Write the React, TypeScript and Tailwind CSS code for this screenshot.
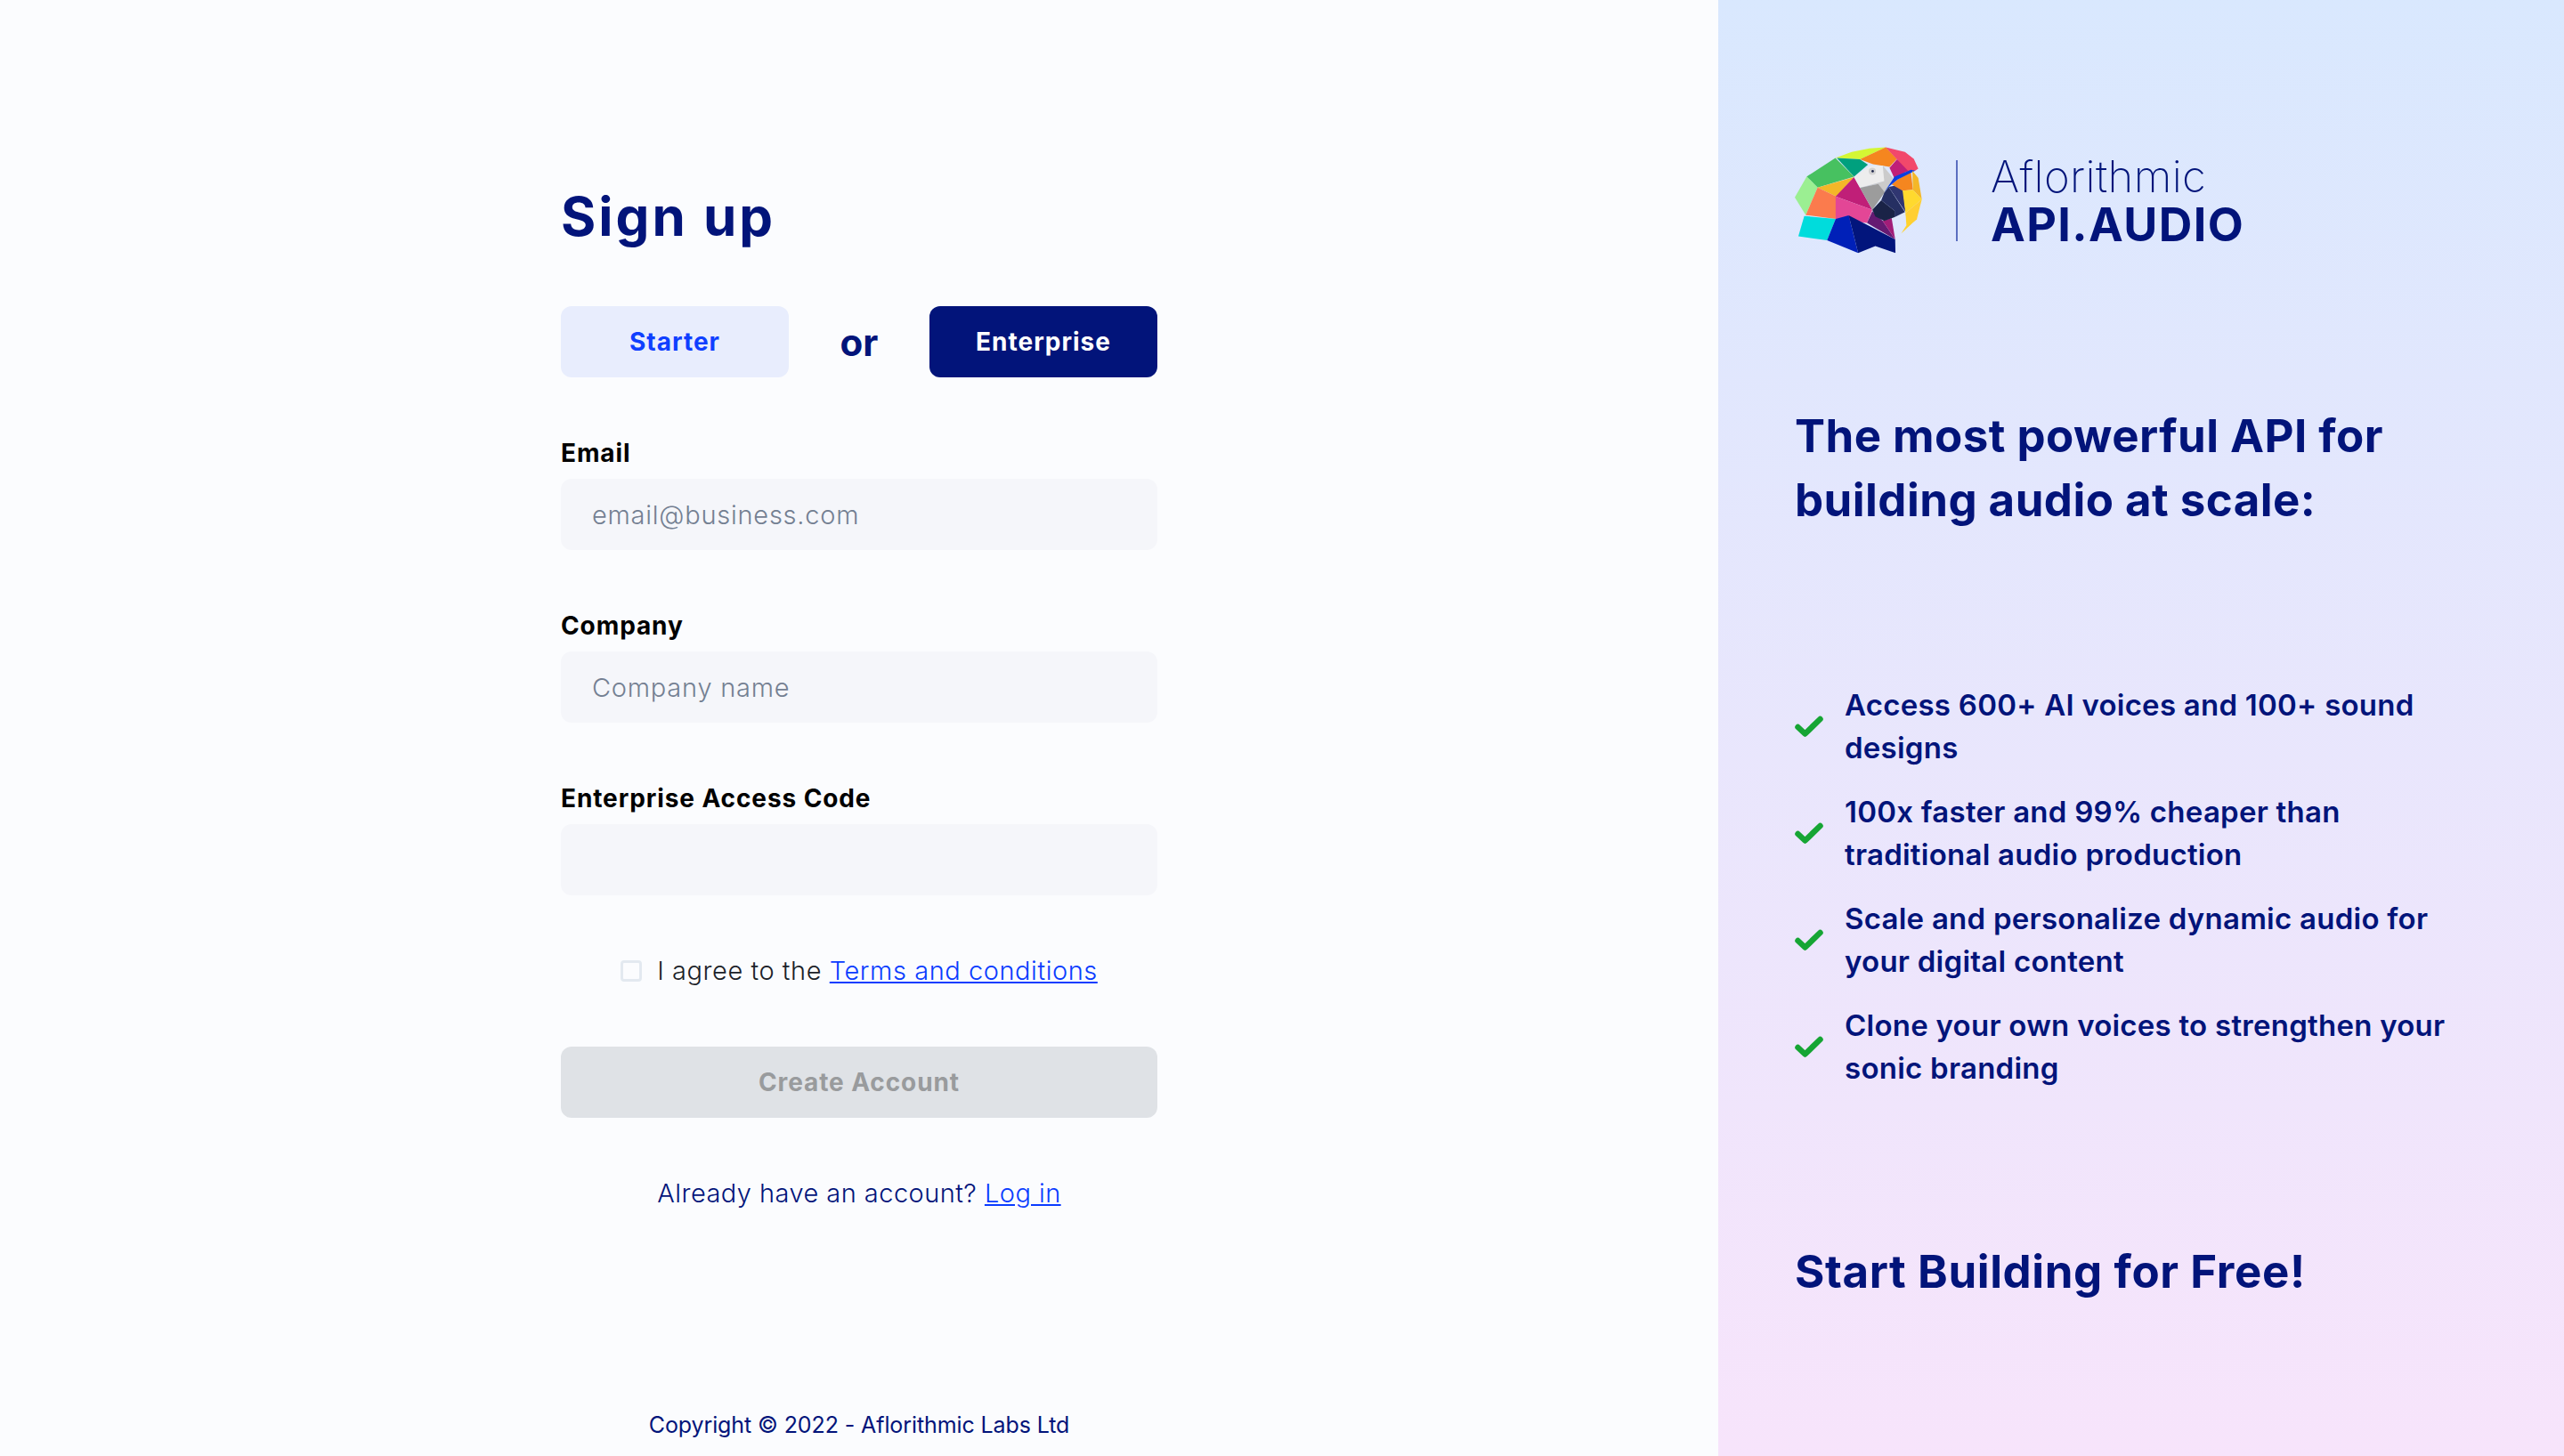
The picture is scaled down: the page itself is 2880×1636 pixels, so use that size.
import React from 'react';

const parrot: [string, string][] = [
  ['#d4f734', '185,82 240,62 300,50 355,46 268,87 190,82'],
  ['#f5861f', '268,87 355,46 393,85 368,112 312,103'],
  ['#f2486b', '355,46 420,62 450,85 465,118 455,125 425,130 393,87'],
  ['#c01f78', '393,87 430,125 385,152 368,115'],
  ['#00a07e', '190,82 268,87 295,105 248,145'],
  ['#47c160', '185,82 248,145 125,182 88,145'],
  ['#9bef92', '88,145 125,182 85,275 48,215'],
  ['#f4b728', '125,182 248,147 188,212'],
  ['#fb7b4d', '125,182 188,212 186,288 85,275'],
  ['#c01f78', '248,147 310,257 186,212'],
  ['#e34696', '186,212 310,257 292,302 186,288'],
  ['#ededed', '248,147 300,110 345,108 380,150 350,160 268,183'],
  ['#cbcbcb', '345,108 380,150 352,198 330,170 268,183 350,160'],
  ['#9c9c9c', '268,183 330,170 352,198 310,257'],
  ['#00dcdc', '80,278 186,288 157,360 60,347'],
  ['#0020b8', '186,288 230,276 262,403 157,360'],
  ['#02157c', '230,276 387,357 388,403 320,380 262,403'],
  ['#651a72', '310,262 345,295 387,357 292,302'],
  ['#a11d78', '345,295 375,285 387,357'],
  ['#1a2347', '310,257 340,225 385,260 385,282 350,295 320,280'],
  ['#252f62', '340,225 350,200 365,180 420,265 385,282 385,260'],
  ['#303671', '365,180 392,175 415,195 422,265'],
  ['#f5861f', '440,128 447,190 412,193 375,172 395,155'],
  ['#0b3fe0', '350,198 385,145 440,122 455,125 395,155 365,180'],
  ['#f4b728', '445,125 465,150 477,222 447,190'],
  ['#ffd92e', '412,193 447,190 477,222 422,268'],
  ['#ffcf33', '477,222 460,290 430,315 422,268'],
  ['#ffd22e', '422,268 442,305 407,338 425,310'],
];

const features = [
  'Access 600+ AI voices and 100+ sound designs',
  '100x faster and 99% cheaper than traditional audio production',
  'Scale and personalize dynamic audio for your digital content',
  'Clone your own voices to strengthen your sonic branding',
];

const Field = ({ label, placeholder }: { label: string; placeholder?: string }) => (
  <div className="mt-[67px]">
    <label className="block h-[35px] text-[28px] leading-[36px] font-bold tracking-[0.9px] text-black">{label}</label>
    <input
      placeholder={placeholder}
      className="mt-[12px] block h-[80px] w-full rounded-[12px] bg-[#f5f6fa] px-[35px] text-[29px] font-light tracking-[0.75px] text-[#02147a] outline-none placeholder:text-[#748092]"
    />
  </div>
);

export default function App() {
  return (
    <div className="flex h-screen w-full font-['Inter',sans-serif] text-[#02147a]">
      {/* Form side */}
      <div className="flex h-full flex-1 flex-col items-center bg-[#fbfcfe]">
        <div className="w-[670px] pt-[207px]">
          <h1 className="h-[72px] text-[60px] leading-[72px] font-bold tracking-[3px]">Sign up</h1>

          <div className="mt-[65px] flex h-[80px] items-center justify-between">
            <button className="h-[80px] w-[256px] rounded-[12px] bg-[#e8edfd] text-[28px] font-bold tracking-[1px] text-[#0f3fff]">Starter</button>
            <span className="text-[42px] font-bold">or</span>
            <button className="h-[80px] w-[256px] rounded-[12px] bg-[#02147a] text-[28px] font-bold tracking-[1px] text-white">Enterprise</button>
          </div>

          <Field label="Email" placeholder="email@business.com" />
          <Field label="Company" placeholder="Company name" />
          <Field label="Enterprise Access Code" />

          <div className="mt-[67px] flex h-[36px] items-center justify-center">
            <span className="h-[24px] w-[24px] rounded-[4px] border-[3px] border-[#e3e9f0] bg-[#fbfcfe]" />
            <p className="ml-[17px] text-[29px] font-light tracking-[0.55px] text-[#1b1f29]">
              I agree to the <a className="text-[#0a3cff] underline">Terms and conditions</a>
            </p>
          </div>

          <button className="mt-[67px] block h-[80px] w-full rounded-[12px] bg-[#dfe2e6] text-[28px] font-bold tracking-[0.9px] text-[#999b9d]">
            Create Account
          </button>

          <p className="mt-[65px] text-center text-[29px] leading-[40px] font-light tracking-[0.45px]">
            Already have an account? <a className="text-[#0a3cff] underline">Log in</a>
          </p>
        </div>
        <p className="mt-auto pb-[20px] text-[25px] leading-[30px] tracking-[-0.1px]">Copyright © 2022 - Aflorithmic Labs Ltd</p>
      </div>

      {/* Marketing side */}
      <div className="h-full w-[950px] bg-gradient-to-b from-[#d9e8fe] to-[#f7e4fb] pt-[165px] pl-[86px]">
        <div className="flex h-[120px] items-center">
          <svg width="143" height="120" viewBox="48 45 430 360">
            {parrot.map(([fill, points], i) => (
              <polygon key={i} fill={fill} points={points} />
            ))}
            <circle cx="310" cy="127" r="12" fill="#d2d2d2" />
            <circle cx="311" cy="127" r="4" fill="#1a2347" />
          </svg>
          <div className="ml-[38px] h-[91px] w-[2px] bg-[#5b6fc0]" />
          <div className="ml-[37px] pt-[3px]">
            <div className="h-[50px] text-[49px] leading-[50px] font-extralight tracking-[0.4px]">Aflorithmic</div>
            <div className="mt-[3px] h-[52px] text-[52px] leading-[52px] font-bold tracking-[1.4px]">API.AUDIO</div>
          </div>
        </div>

        <h2 className="mt-[169px] w-[760px] text-[51px] leading-[72px] font-bold tracking-[0.45px]">
          The most powerful API for
          <br />
          building audio at scale:
        </h2>

        <ul className="mt-[170px] flex w-[820px] flex-col gap-[24px]">
          {features.map((f) => (
            <li key={f} className="flex items-center">
              <svg width="32" height="25" viewBox="0 0 32 25" className="shrink-0" fill="none" stroke="#16a534" strokeWidth="6.5" strokeLinecap="round" strokeLinejoin="round">
                <path d="M3.5 13 L11.5 20.5 L28.5 4" />
              </svg>
              <span className="ml-[24px] w-[700px] text-[33px] leading-[48px] font-semibold tracking-[0.25px]">{f}</span>
            </li>
          ))}
        </ul>

        <h2 className="mt-[169px] text-[51px] leading-[72px] font-bold tracking-[0.6px]">Start Building for Free!</h2>
      </div>
    </div>
  );
}
